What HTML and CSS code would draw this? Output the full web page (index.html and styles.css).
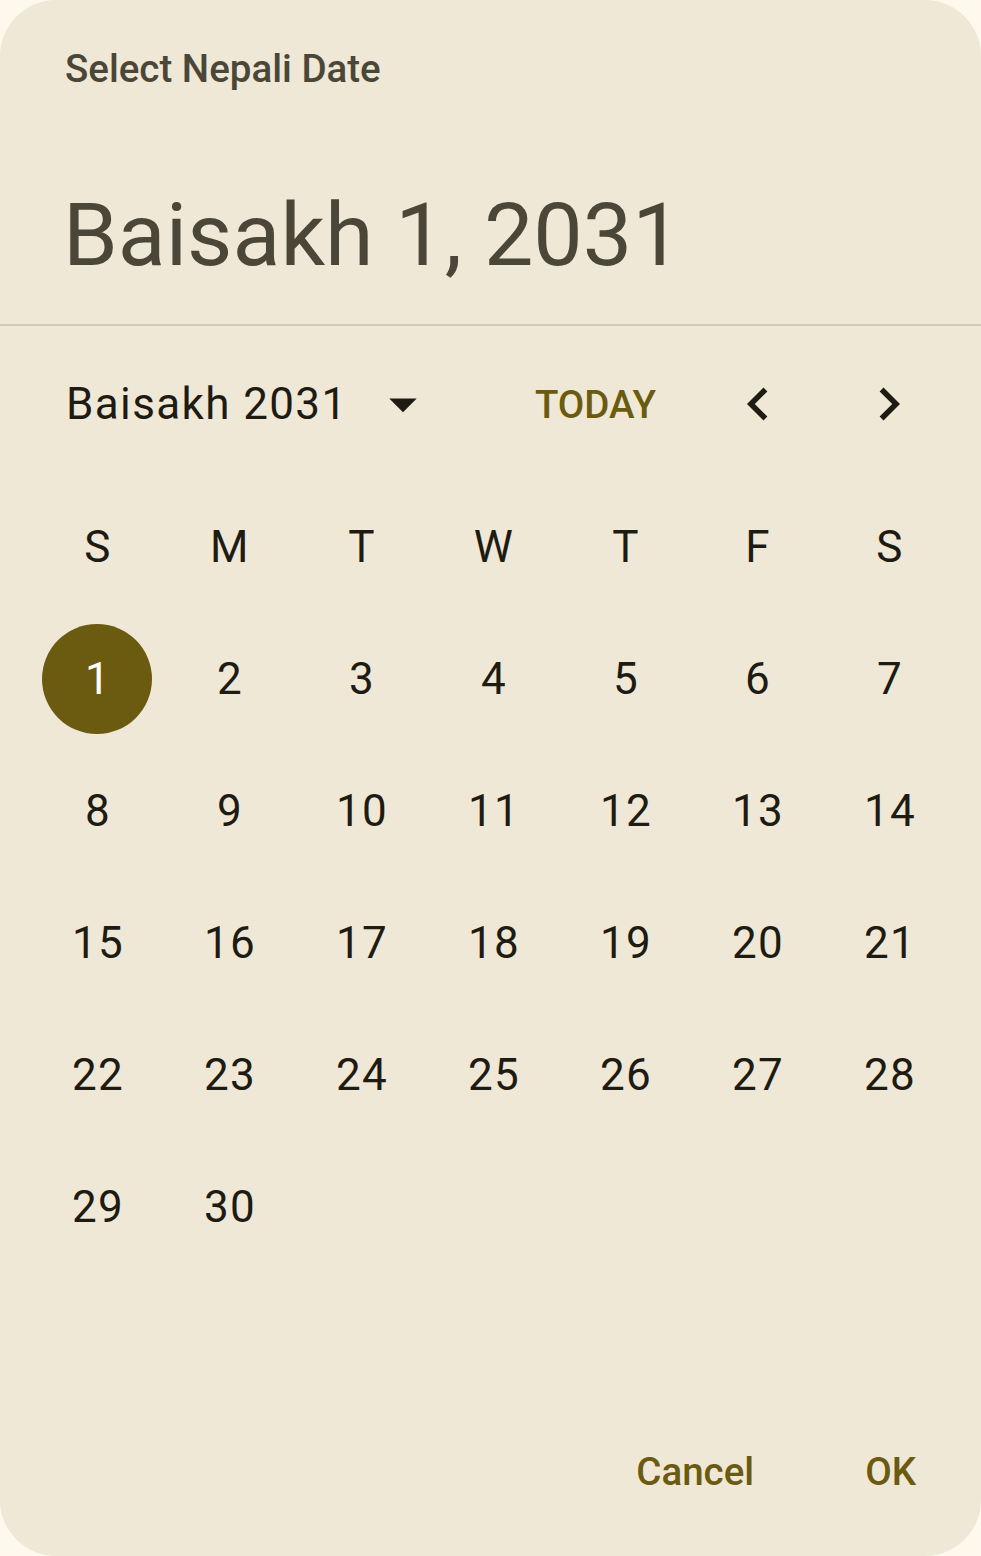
FILE: index.html
```html
<!DOCTYPE html>
<html>
<head>
<meta charset="utf-8">
<link rel="stylesheet" href="styles.css">
</head>
<body>
<div class="dialog">
  <div class="header">
    <div class="title">Select Nepali Date</div>
    <div class="headline">Baisakh 1, 2031</div>
  </div>
  <div class="divider"></div>
  <div class="controls">
    <div class="month">
      <span class="month-label">Baisakh 2031</span>
      <span class="icon-box">
        <svg width="66" height="66" viewBox="0 0 24 24"><path d="M7 10l5 5 5-5z" fill="#1E1B13"/></svg>
      </span>
    </div>
    <div class="nav">
      <span class="today">TODAY</span>
      <span class="icon-box">
        <svg width="66" height="66" viewBox="0 0 24 24"><path d="M15.41 7.41L14 6l-6 6 6 6 1.41-1.41L10.83 12z" fill="#1E1B13"/></svg>
      </span>
      <span class="icon-box">
        <svg width="66" height="66" viewBox="0 0 24 24"><path d="M10 6L8.59 7.41 13.17 12l-4.58 4.59L10 18l6-6z" fill="#1E1B13"/></svg>
      </span>
    </div>
  </div>
  <div class="grid">
    <div class="wd">S</div><div class="wd">M</div><div class="wd">T</div><div class="wd">W</div><div class="wd">T</div><div class="wd">F</div><div class="wd">S</div>
    <div class="day"><span class="sel">1</span></div><div class="day">2</div><div class="day">3</div><div class="day">4</div><div class="day">5</div><div class="day">6</div><div class="day">7</div>
    <div class="day">8</div><div class="day">9</div><div class="day">10</div><div class="day">11</div><div class="day">12</div><div class="day">13</div><div class="day">14</div>
    <div class="day">15</div><div class="day">16</div><div class="day">17</div><div class="day">18</div><div class="day">19</div><div class="day">20</div><div class="day">21</div>
    <div class="day">22</div><div class="day">23</div><div class="day">24</div><div class="day">25</div><div class="day">26</div><div class="day">27</div><div class="day">28</div>
    <div class="day">29</div><div class="day">30</div>
  </div>
  <div class="actions">
    <span class="btn">Cancel</span>
    <span class="btn">OK</span>
  </div>
</div>
</body>
</html>
```

FILE: styles.css
```css
* { box-sizing: border-box; }
html, body {
  margin: 0;
  padding: 0;
  background: #FFF8EC;
}
body {
  font-family: Roboto, "Noto Sans", sans-serif;
  width: 981px;
  height: 1556px;
  overflow: hidden;
}
.dialog {
  width: 981px;
  height: 1556px;
  background: #F0E8D6;
  border-radius: 56px;
  display: flex;
  flex-direction: column;
}
.header {
  padding: 47px 0 0 65px;
}
.title {
  font-size: 38.5px;
  line-height: 44px;
  font-weight: 500;
  letter-spacing: 0;
  color: #4A4739;
}
.headline {
  margin-top: 94px;
  margin-left: -2px;
  font-size: 88px;
  line-height: 100px;
  font-weight: 400;
  color: #4A4739;
}
.divider {
  margin-top: 39px;
  height: 2px;
  background: #D3CBB7;
}
.controls {
  margin-top: 12px;
  height: 132px;
  display: flex;
  align-items: center;
  justify-content: space-between;
  padding: 0 59px 0 66px;
}
.month {
  display: flex;
  align-items: center;
}
.month-label {
  font-size: 44px;
  line-height: 66px;
  letter-spacing: 1.375px;
  color: #1E1B13;
}
.month .icon-box {
  margin-left: 22px;
}
.icon-box {
  width: 66px;
  height: 66px;
  display: flex;
}
.nav {
  display: flex;
  align-items: center;
}
.today {
  font-size: 38.5px;
  font-weight: 500;
  letter-spacing: 0;
  color: #6B5B10;
  margin-right: 69px;
}
.nav .icon-box + .icon-box {
  margin-left: 65px;
}
.grid {
  margin: 11px 0 0 32px;
  display: grid;
  grid-template-columns: repeat(7, 132px);
  grid-auto-rows: 132px;
}
.wd, .day {
  display: flex;
  align-items: center;
  justify-content: center;
  font-size: 44px;
  letter-spacing: 1.375px;
  color: #1E1B13;
}
.sel {
  flex: none;
  width: 110px;
  height: 110px;
  margin-left: -2px;
  padding-left: 2px;
  border-radius: 50%;
  background: #6B5B10;
  color: #FFFFFF;
  display: flex;
  align-items: center;
  justify-content: center;
}
.actions {
  margin-top: auto;
  display: flex;
  justify-content: flex-end;
  align-items: center;
  gap: 45px;
  padding: 0 32px 30px 0;
}
.btn {
  height: 110px;
  padding: 0 33px;
  display: flex;
  align-items: center;
  font-size: 38.5px;
  font-weight: 500;
  letter-spacing: 0;
  color: #6B5B10;
}
```
